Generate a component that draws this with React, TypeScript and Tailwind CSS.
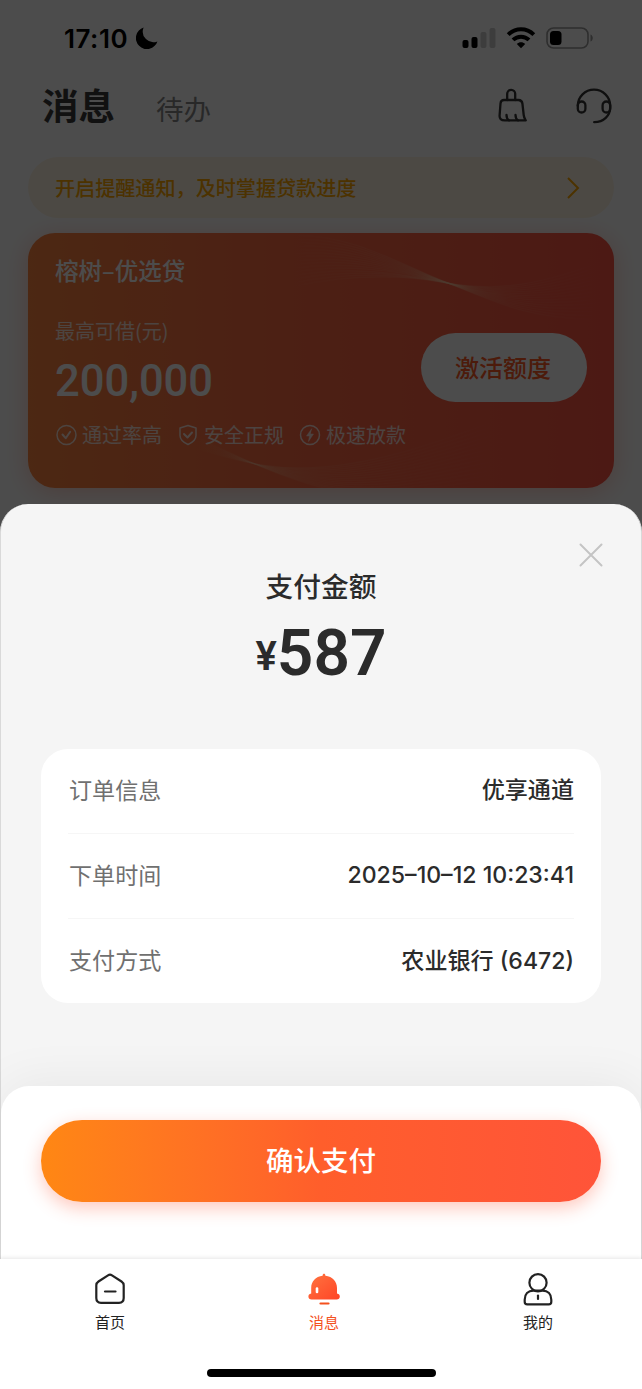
import type { ReactNode } from 'react';

const orderRows = [
  { label: '订单信息', value: '优享通道' },
  { label: '下单时间', value: '2025–10–12 10:23:41' },
  { label: '支付方式', value: '农业银行 (6472)' },
];

function StatusBar() {
  return (
    <div className="flex h-[76px] items-center pl-16 pr-[48px] text-black">
      <span className="pt-px font-['Inter',sans-serif] text-[26px] leading-none font-semibold tracking-[0.5px]">17:10</span>
      <svg className="ml-2 h-[22px] w-[22px]" viewBox="0 0 22 22" fill="currentColor">
        <path d="M7.6 0.6 A11 11 0 1 0 21.4 14.4 A10.6 10.6 0 0 1 7.6 0.6Z" />
      </svg>
      <div className="flex-1" />
      <svg className="h-[22px] w-[34px]" viewBox="0 0 34 22" fill="currentColor">
        <rect x="0.5" y="13" width="6" height="8" rx="2" />
        <rect x="9.5" y="10" width="6" height="11" rx="2" />
        <rect x="18.5" y="5" width="6" height="16" rx="2" opacity="0.2" />
        <rect x="27.5" y="1" width="6" height="20" rx="2" opacity="0.2" />
      </svg>
      <svg className="ml-[10px] h-[22px] w-[30px]" viewBox="0 0 30 22" fill="none" stroke="currentColor" strokeWidth="4">
        <path d="M2.2 7.6C9.4 0.5 20.6 0.5 27.8 7.6" />
        <path d="M7 12.9C11.5 8.6 18.5 8.6 23 12.9" />
        <path d="M10.8 17C13.2 14.7 16.8 14.7 19.2 17L15 21.2Z" fill="currentColor" stroke="none" />
      </svg>
      <svg className="ml-[10px] h-[22px] w-[48px]" viewBox="0 0 48 22" fill="currentColor">
        <rect x="1" y="1" width="41" height="20" rx="6.5" fill="none" stroke="currentColor" strokeWidth="1.6" opacity="0.4" />
        <rect x="4" y="4" width="11.5" height="14" rx="3.5" />
        <path d="M44.5 7.5c3 1 3 6 0 7z" opacity="0.4" />
      </svg>
    </div>
  );
}

function BroomIcon() {
  return (
    <svg className="h-9 w-[30px]" viewBox="0 0 30 36" fill="none" stroke="#333" strokeWidth="2.3" strokeLinecap="round" strokeLinejoin="round">
      <path d="M10.2 12V5.8a4 4 0 0 1 8 0V12" />
      <path d="M7 12h14.400c2.500 0 3.700 1.200 4 3.500L26.700 27c.3 2.500.9 3.800 2 5.400H7.800c-3.800 0-5.500-1.800-5.200-5L3.500 15.500c.2-2.300 1.300-3.500 3.500-3.500Z" />
      <path d="M9.500 27c0 2.500.8 4.300 2.500 5.400M18.500 27c0 2.500.8 4.300 2.500 5.400" />
    </svg>
  );
}

function HeadsetIcon() {
  return (
    <svg className="h-9 w-9" viewBox="0 0 36 36" fill="none" stroke="#333" strokeWidth="2.300" strokeLinecap="round" strokeLinejoin="round">
      <path d="M1.800 17.800a16.200 16.200 0 0 1 32.400 0v1.500c0 8.500-6.500 14.900-16 14.900" />
      <rect x="1.800" y="13.500" width="7.600" height="11" rx="3.800" />
      <rect x="26.600" y="13.500" width="7.600" height="11" rx="3.800" />
    </svg>
  );
}

function CardWaves() {
  const lines = Array.from({ length: 15 }, (_, i) => i);
  return (
    <svg className="absolute inset-0 h-full w-full" viewBox="0 0 586 255" fill="none" strokeWidth="1.200">
      <defs>
        <linearGradient id="fadeTop" gradientUnits="userSpaceOnUse" x1="265" y1="0" x2="570" y2="0">
          <stop offset="0" stopColor="#ffc9a0" stopOpacity="0" />
          <stop offset="0.450" stopColor="#ffc9a0" stopOpacity="0.200" />
          <stop offset="1" stopColor="#ffc9a0" stopOpacity="0" />
        </linearGradient>
        <linearGradient id="fadeBottom" gradientUnits="userSpaceOnUse" x1="165" y1="0" x2="470" y2="0">
          <stop offset="0" stopColor="#ffc9a0" stopOpacity="0" />
          <stop offset="0.300" stopColor="#ffc9a0" stopOpacity="0.130" />
          <stop offset="1" stopColor="#ffc9a0" stopOpacity="0" />
        </linearGradient>
      </defs>
      {lines.map((i) => (
        <path
          key={`t${i}`}
          stroke="url(#fadeTop)"
          d={`M265 ${3 + i * 3.6}C320 ${i * 3} 370 ${30 + i * 0.8} 415 ${48 + i * 0.1}S500 ${87 - i * 2.2} 570 ${86 - i * 4}`}
        />
      ))}
      {lines.map((i) => (
        <path
          key={`b${i}`}
          stroke="url(#fadeBottom)"
          d={`M165 ${202 + i * 0.9}C215 ${226 + i * 0.3} 250 ${244 - i * 0.4} 300 ${256 - i * 1.6}S400 ${258 - i * 3.2} 470 ${250 - i * 4.5}`}
        />
      ))}
    </svg>
  );
}

function Perk({ icon, text }: { icon: ReactNode; text: string }) {
  return (
    <div className="flex items-center gap-[5px]">
      <svg className="h-[22px] w-[22px]" viewBox="0 0 22 22" fill="none" stroke="currentColor" strokeWidth="1.500" strokeLinecap="round" strokeLinejoin="round">
        {icon}
      </svg>
      <span>{text}</span>
    </div>
  );
}

function LoanCard() {
  return (
    <div className="relative mx-7 mt-[15px] h-[255px] rounded-[27px] bg-linear-to-r from-[#ff8540] via-[#ff6b45] via-45% to-[#ff5545] pt-[21px] pl-[27px] text-white shadow-[0_4px_24px_rgba(255,90,60,0.3)]">
      <CardWaves />
      <div className="relative">
        <div className="text-[23.500px] leading-8 font-medium">榕树–优选贷</div>
        <div className="mt-[29px] text-[20px] leading-8 opacity-80">最高可借(元)</div>
        <div className="mt-[9px] font-['Roboto',sans-serif] text-[43.500px] leading-[52px] font-medium">200,000</div>
        <div className="mt-[11px] flex gap-[15px] text-[20px] leading-8 opacity-80">
          <Perk
            text="通过率高"
            icon={
              <>
                <circle cx="11.500" cy="11" r="9.500" />
                <path d="m7.500 10.500 3.200 3.700 4.500-6.500" strokeWidth="2" />
              </>
            }
          />
          <Perk
            text="安全正规"
            icon={
              <>
                <path d="M11 1.500 19 4v7.500c0 4-3.500 7-8 9-4.500-2-8-5-8-9V4Z" />
                <path d="m7 10 3.500 3.500L15 8.500" strokeWidth="2" />
              </>
            }
          />
          <Perk
            text="极速放款"
            icon={
              <>
                <circle cx="11" cy="11" r="9.500" />
                <path d="M12.500 5 7.500 12h3l-1 5.500 5-7.500h-3Z" fill="currentColor" strokeWidth="0.500" />
              </>
            }
          />
        </div>
      </div>
      <button className="absolute top-[100px] right-[27px] h-[69px] w-[166px] rounded-full bg-white pr-0.5 pb-px text-[24px] font-medium text-[#ff5a26]">
        激活额度
      </button>
    </div>
  );
}

function MessagesPage() {
  return (
    <div className="relative h-[560px] bg-white">
      <StatusBar />
      <div className="flex h-[81px] items-start pr-[30px] pl-[42px]">
        <h1 className="text-[36.500px] leading-[58px] font-bold text-[#3a3a3a]">消息</h1>
        <span className="ml-[41px] text-[27.500px] leading-[64px] text-[#888]">待办</span>
        <div className="ml-auto mt-[12px] flex gap-[49px]">
          <BroomIcon />
          <HeadsetIcon />
        </div>
      </div>
      <div className="mx-7 flex h-[61px] items-center justify-between rounded-full bg-[#fff5e4] pr-[34px] pl-[27px] text-[#ffa800]">
        <span className="pt-px text-[20.100px] font-medium">开启提醒通知，及时掌握贷款进度</span>
        <svg className="h-[22px] w-[14px]" viewBox="0 0 14 22" fill="none" stroke="currentColor" strokeWidth="2">
          <path d="m2 1 10 10L2 21" />
        </svg>
      </div>
      <LoanCard />
      <div className="absolute inset-0 bg-black/70" />
    </div>
  );
}

function PaymentSheet() {
  return (
    <section className="relative -mt-14 flex h-[755px] flex-col rounded-t-[28px] border-x border-[#d9d9d9] bg-[#f5f5f5] text-[#2b2b2b]">
      <button className="absolute top-[39px] right-[38px] h-6 w-6">
        <svg viewBox="0 0 24 24" fill="none" stroke="#c4c4c4" strokeWidth="2" strokeLinecap="round">
          <path d="m1.500 1.500 21 21M22.500 1.500l-21 21" />
        </svg>
      </button>
      <h2 className="mt-[61px] text-center text-[27.700px] leading-10 font-medium">支付金额</h2>
      <div className="mt-[9px] flex h-[80px] items-center justify-center font-['Roboto',sans-serif] leading-none font-semibold">
        <span className="pt-[6px] text-[40px]">¥</span>
        <span className="text-[64px]">587</span>
      </div>
      <dl className="mx-10 mt-[55px] h-[254px] rounded-[27px] bg-white px-[27px]">
        {orderRows.map((row) => (
          <div key={row.label} className="flex h-[85px] items-center justify-between border-b border-[#f6f6f6] pb-[4px] pl-px text-[23.100px] last:border-b-0">
            <dt className="text-[#707070]">{row.label}</dt>
            <dd className="pt-[3px] font-['Inter','Noto_Sans_CJK_SC',sans-serif] font-medium">{row.value}</dd>
          </div>
        ))}
      </dl>
      <div className="mt-auto h-[173px] rounded-t-[28px] bg-white px-10 pt-[34px] shadow-[0_-4px_50px_rgba(0,0,0,0.06)]">
        <button className="h-[82px] w-full rounded-full bg-linear-to-r from-[#ff8713] via-[#ff5e2b] via-50% to-[#ff5439] pb-0.5 text-[27.500px] font-medium text-white shadow-[0_6px_18px_rgba(255,84,50,0.32)]">
          确认支付
        </button>
      </div>
    </section>
  );
}

function Tab({ label, active, children }: { label: string; active?: boolean; children: ReactNode }) {
  return (
    <div className={active ? 'flex w-12 flex-col items-center text-[#f4511e]' : 'flex w-12 flex-col items-center text-[#222]'}>
      <svg className="h-[34px] w-[34px]" viewBox="0 0 34 34" fill="none" stroke="currentColor" strokeWidth="2.200" strokeLinecap="round" strokeLinejoin="round">
        {children}
      </svg>
      <span className="mt-1 text-[15px] leading-6">{label}</span>
    </div>
  );
}

function TabBar() {
  return (
    <nav className="relative h-[130px] bg-white shadow-[0_-1px_4px_rgba(0,0,0,0.1)]">
      <div className="flex gap-[166px] pt-[13px] pl-[86px]">
        <Tab label="首页">
          <path d="M15 3.300a3.600 3.600 0 0 1 4 0l9.500 6.200c1.500 1 2.200 2 2.200 3.800v12.800c0 3-1.700 4.700-4.700 4.700H8c-3 0-4.700-1.700-4.700-4.700V13.300c0-1.800.7-2.800 2.200-3.800Z" />
          <path d="M12 19.500h10.500" />
        </Tab>
        <Tab label="消息" active>
          <defs>
            <linearGradient id="bell" x1="0" y1="0" x2="1" y2="1">
              <stop offset="0" stopColor="#ff7440" />
              <stop offset="1" stopColor="#ff4526" />
            </linearGradient>
          </defs>
          <path
            d="M17 1.800c.8 0 1.300.6 1.400 2C25.500 4.500 30 9.500 30 16v5.500c2 .4 2.800 1.500 2.800 3 0 2-1.300 3-3.200 3H4.600c-2 0-3.200-1-3.200-3 0-1.500.8-2.600 2.800-3V16C4.200 9.500 8.600 4.500 15.600 3.800c.1-1.400.6-2 1.400-2Z"
            fill="url(#bell)"
            stroke="none"
          />
          <path d="M10 16.500v3.500" stroke="#fff" strokeWidth="2.600" />
          <path d="M13.500 31.500h8" stroke="#f4511e" />
        </Tab>
        <Tab label="我的">
          <circle cx="17" cy="10.700" r="8.600" />
          <path d="M12.500 18.700h9c5.500 0 8.800 3.500 8.800 9v2c0 1.700-.8 2.700-2.600 2.700H6.300c-1.800 0-2.600-1-2.600-2.700v-2c0-5.500 3.300-9 8.800-9Z" />
          <path d="M17 23.500v3.500" />
        </Tab>
      </div>
      <div className="mx-auto mt-[35px] h-2 w-[229px] rounded-full bg-black" />
    </nav>
  );
}

export default function App() {
  return (
    <main className="h-[1389px] w-[642px] overflow-hidden bg-white font-['Noto_Sans_CJK_SC',sans-serif]">
      <MessagesPage />
      <PaymentSheet />
      <TabBar />
    </main>
  );
}
